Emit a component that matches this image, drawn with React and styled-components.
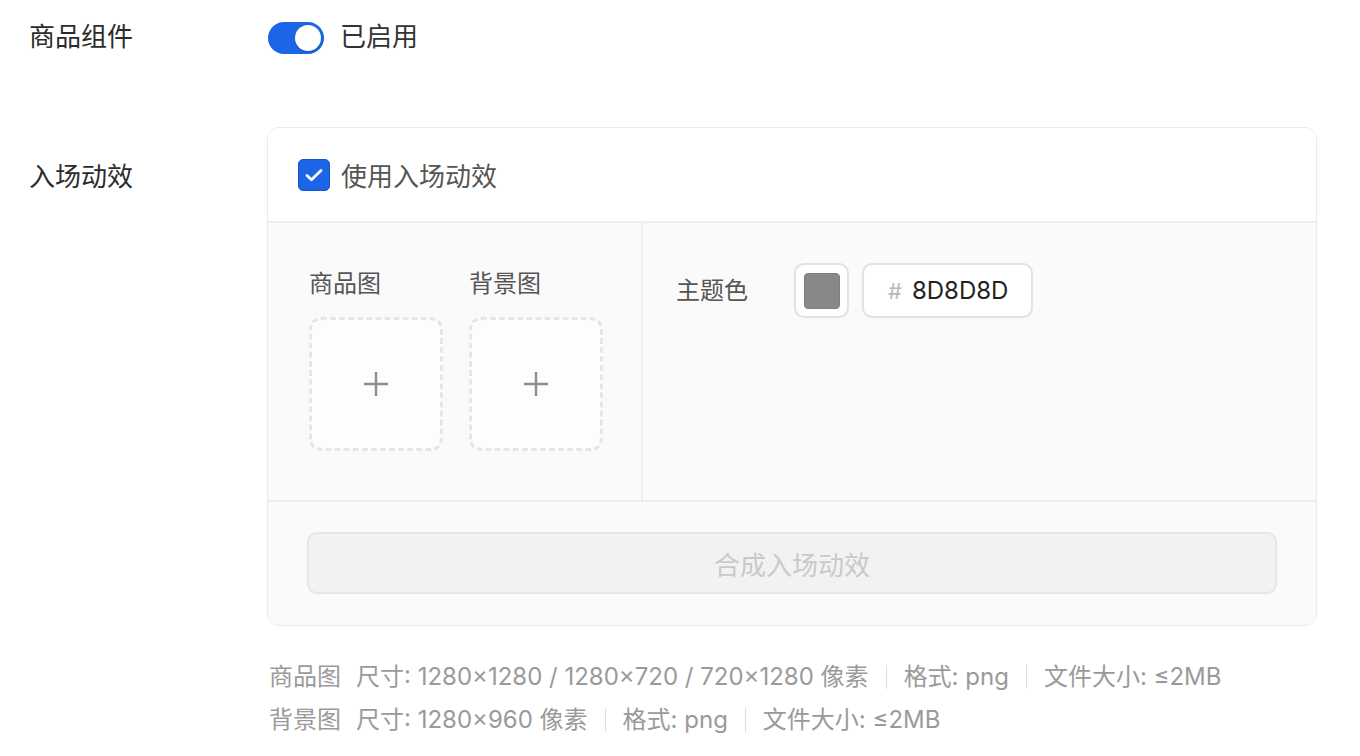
import React from "react"
import styled, { createGlobalStyle } from "styled-components"

const GlobalStyle = createGlobalStyle`
  body {
    margin: 0;
    background: #fff;
    font-family: "Inter", "Noto Sans CJK SC", sans-serif;
    color: #333;
  }
`

const Page = styled.div`
  padding-left: 29px;
`

const Row = styled.div`
  display: flex;
  align-items: ${props => (props.top ? "flex-start" : "center")};
  min-height: ${props => props.height || "auto"};
  margin-top: ${props => props.offset || "0"};
`

const Label = styled.div`
  width: 238px;
  flex-shrink: 0;
  font-size: 26px;
  line-height: 36px;
  color: #2b2b2b;
  padding-top: ${props => props.pad || "0"};
  margin-top: ${props => props.lift || "0"};
`

const Toggle = styled.div`
  width: 56px;
  height: 32px;
  border-radius: 16px;
  background: #1b65e6;
  position: relative;
  margin-left: 1px;

  &::after {
    content: "";
    position: absolute;
    right: 3px;
    top: 3px;
    width: 26px;
    height: 26px;
    border-radius: 50%;
    background: #fff;
    box-shadow: 0 1px 2px rgba(0, 0, 0, 0.15);
  }
`

const ToggleText = styled.span`
  margin-left: 16px;
  font-size: 26px;
  line-height: 36px;
  margin-top: -2px;
  color: #333;
`

const Column = styled.div`
  display: flex;
  flex-direction: column;
`

const Card = styled.div`
  width: 1050px;
  border: 1px solid #ebebeb;
  border-radius: 12px;
  overflow: hidden;
  background: #fafafa;
  box-sizing: border-box;
`

const CardHeader = styled.div`
  height: 95px;
  display: flex;
  align-items: center;
  padding-left: 30px;
  background: #fff;
  border-bottom: 2px solid #efefef;
  box-sizing: border-box;
`

const Checkbox = styled.span`
  width: 32px;
  height: 32px;
  border-radius: 5px;
  background: #1b65e6;
  display: flex;
  align-items: center;
  justify-content: center;
  box-sizing: border-box;
  border: 1px solid #1756c6;
`

const CheckText = styled.span`
  margin-left: 11px;
  font-size: 26px;
  color: #555;
`

const CardBody = styled.div`
  display: flex;
  height: 277px;
  border-bottom: 2px solid #eeeeee;
`

const LeftPanel = styled.div`
  width: 375px;
  border-right: 2px solid #eeeeee;
  padding: 45px 0 0 41px;
  box-sizing: border-box;
  display: flex;
  gap: 26px;
`

const UploadGroup = styled.div`
  display: flex;
  flex-direction: column;
`

const SmallLabel = styled.div`
  font-size: 24px;
  line-height: 32px;
  color: #555;
`

const UploadBox = styled.div`
  margin-top: 17px;
  width: 134px;
  height: 134px;
  border: 3px dashed #e6e6e6;
  border-radius: 12px;
  background: #fdfdfd;
  box-sizing: border-box;
  display: flex;
  align-items: center;
  justify-content: center;
`

const RightPanel = styled.div`
  flex: 1;
  padding: 40px 0 0 33px;
  display: flex;
  align-items: flex-start;
`

const ColorRow = styled.div`
  display: flex;
  align-items: center;
`

const ColorLabel = styled(SmallLabel)`
  width: 118px;
`

const Swatch = styled.div`
  width: 55px;
  height: 55px;
  border: 2px solid #e2e2e2;
  border-radius: 10px;
  background: #fff;
  box-sizing: border-box;
  display: flex;
  align-items: center;
  justify-content: center;
`

const SwatchFill = styled.div`
  width: 36px;
  height: 36px;
  border-radius: 4px;
  background: #888888;
  border: 1px solid #7d7d7d;
  box-sizing: border-box;
`

const HexInput = styled.div`
  margin-left: 13px;
  width: 171px;
  height: 55px;
  border: 2px solid #e2e2e2;
  border-radius: 10px;
  background: #fff;
  box-sizing: border-box;
  display: flex;
  align-items: center;
  padding-left: 24px;
  font-size: 24px;
`

const Hash = styled.span`
  color: #b8b8b8;
  margin-right: 10px;
  font-size: 22px;
`

const HexValue = styled.span`
  color: #222;
`

const CardFooter = styled.div`
  padding: 30px 39px 31px 39px;
`

const SubmitButton = styled.button`
  width: 100%;
  height: 62px;
  border: 2px solid #e6e6e6;
  border-radius: 10px;
  background: #f2f2f2;
  color: #c9c9c9;
  font-family: inherit;
  font-size: 26px;
  cursor: not-allowed;
`

const Notes = styled.div`
  margin-top: 29px;
  padding-left: 2px;
  font-size: 24px;
  line-height: 43px;
  color: #9a9a9a;
`

const NoteLine = styled.div`
  display: flex;
  align-items: center;
`

const NoteTitle = styled.span`
  margin-right: 15px;
`

const Sep = styled.span`
  width: 1px;
  height: 24px;
  background: #dedede;
  margin: 0 17px;
`

const Plus = () => (
  <svg width="26" height="26" viewBox="0 0 26 26">
    <path d="M13 1v24M1 13h24" stroke="#8e8e8e" strokeWidth="2.4" />
  </svg>
)

const Check = () => (
  <svg width="18" height="14" viewBox="0 0 18 14">
    <path d="M2 7.5l4.5 4.2L16 2.5" fill="none" stroke="#fff" strokeWidth="2.8" strokeLinecap="round" strokeLinejoin="round" />
  </svg>
)

const notes = [
  { title: "商品图", items: ["尺寸: 1280×1280 / 1280×720 / 720×1280 像素", "格式: png", "文件大小: ≤2MB"] },
  { title: "背景图", items: ["尺寸: 1280×960 像素", "格式: png", "文件大小: ≤2MB"] },
]

const App = () => (
  <>
    <GlobalStyle />
    <Page>
      <Row height="76px">
        <Label lift="-2px">商品组件</Label>
        <Toggle />
        <ToggleText>已启用</ToggleText>
      </Row>
      <Row top offset="51px">
        <Label pad="32px">入场动效</Label>
        <Column>
          <Card>
            <CardHeader>
              <Checkbox><Check /></Checkbox>
              <CheckText>使用入场动效</CheckText>
            </CardHeader>
            <CardBody>
              <LeftPanel>
                <UploadGroup>
                  <SmallLabel>商品图</SmallLabel>
                  <UploadBox><Plus /></UploadBox>
                </UploadGroup>
                <UploadGroup>
                  <SmallLabel>背景图</SmallLabel>
                  <UploadBox><Plus /></UploadBox>
                </UploadGroup>
              </LeftPanel>
              <RightPanel>
                <ColorRow>
                  <ColorLabel>主题色</ColorLabel>
                  <Swatch><SwatchFill /></Swatch>
                  <HexInput>
                    <Hash>#</Hash>
                    <HexValue>8D8D8D</HexValue>
                  </HexInput>
                </ColorRow>
              </RightPanel>
            </CardBody>
            <CardFooter>
              <SubmitButton disabled>合成入场动效</SubmitButton>
            </CardFooter>
          </Card>
          <Notes>
            {notes.map(note => (
              <NoteLine key={note.title}>
                <NoteTitle>{note.title}</NoteTitle>
                {note.items.map((item, i) => (
                  <React.Fragment key={item}>
                    {i > 0 && <Sep />}
                    <span>{item}</span>
                  </React.Fragment>
                ))}
              </NoteLine>
            ))}
          </Notes>
        </Column>
      </Row>
    </Page>
  </>
)

export default App
